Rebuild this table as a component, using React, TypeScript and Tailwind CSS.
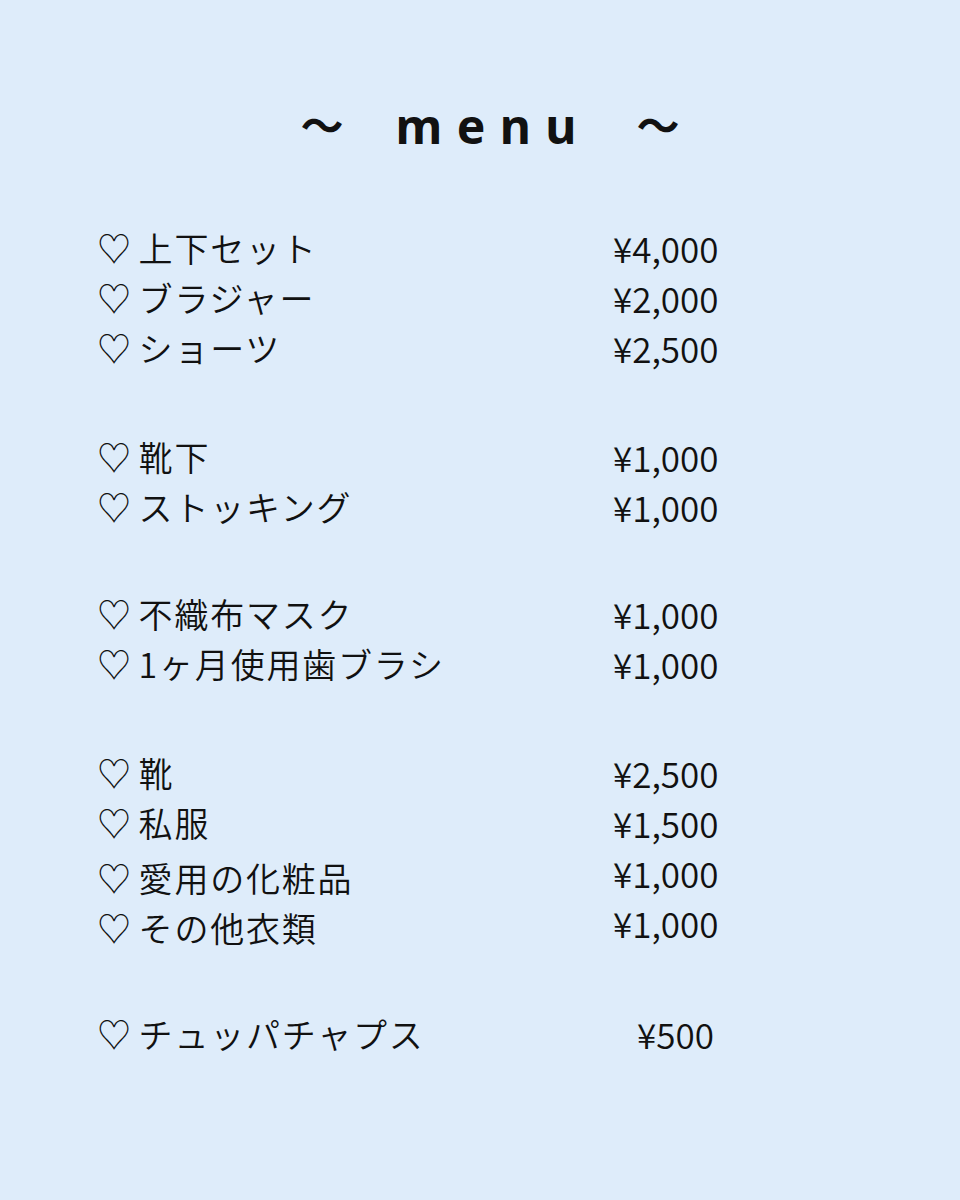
const jp = "font-['Noto_Sans_CJK_JP',sans-serif]";

type Item = { name: string; price: string; nudge?: boolean };

const groups: Item[][] = [
  [
    { name: "上下セット", price: "¥4,000" },
    { name: "ブラジャー", price: "¥2,000" },
    { name: "ショーツ", price: "¥2,500" },
  ],
  [
    { name: "靴下", price: "¥1,000" },
    { name: "ストッキング", price: "¥1,000" },
  ],
  [
    { name: "不織布マスク", price: "¥1,000" },
    { name: "1ヶ月使用歯ブラシ", price: "¥1,000" },
  ],
  [
    { name: "靴", price: "¥2,500" },
    { name: "私服", price: "¥1,500" },
    { name: "愛用の化粧品", price: "¥1,000", nudge: true },
    { name: "その他衣類", price: "¥1,000", nudge: true },
  ],
];

// spacing above each group, measured off the original
const groupGap = ["", "mt-[59px]", "mt-[57px]", "mt-[59px]"];

function Row({ item }: { item: Item }) {
  return (
    <div className="flex h-[50px] items-start">
      <div className={`w-[516px] leading-[50px] ${item.nudge ? "translate-y-[5px]" : ""}`}>
        ♡ <span className="tracking-[1.8px]">{item.name}</span>
      </div>
      <div className="text-[35px] leading-[50px]">{item.price}</div>
    </div>
  );
}

export default function App() {
  return (
    <div className={`min-h-[1200px] w-full bg-[#deecfa] text-[#111111] font-[350] ${jp}`}>
      <div className="flex items-center justify-center pl-[20px] pt-[94px] font-['Noto_Sans','Noto_Sans_CJK_JP',sans-serif] font-bold leading-[64px]">
        <span className="text-[43px]">〜</span>
        <h1 className="ml-[52px] text-[48px] tracking-[0.3em] mr-[-0.3em]">menu</h1>
        <span className="ml-[60px] text-[43px]">〜</span>
      </div>

      <div className="mt-[65px] flex flex-col pl-[97px] text-[34px]">
        {groups.map((g, i) => (
          <div key={i} className={`flex flex-col ${groupGap[i]}`}>
            {g.map((item) => (
              <Row key={item.name} item={item} />
            ))}
          </div>
        ))}
        <div className="mt-[61px] flex h-[50px] items-start">
          <div className="w-[540px] leading-[50px]">
            ♡ <span className="tracking-[1.8px]">チュッパチャプス</span>
          </div>
          <div className="text-[35px] leading-[50px]">¥500</div>
        </div>
      </div>
    </div>
  );
}
